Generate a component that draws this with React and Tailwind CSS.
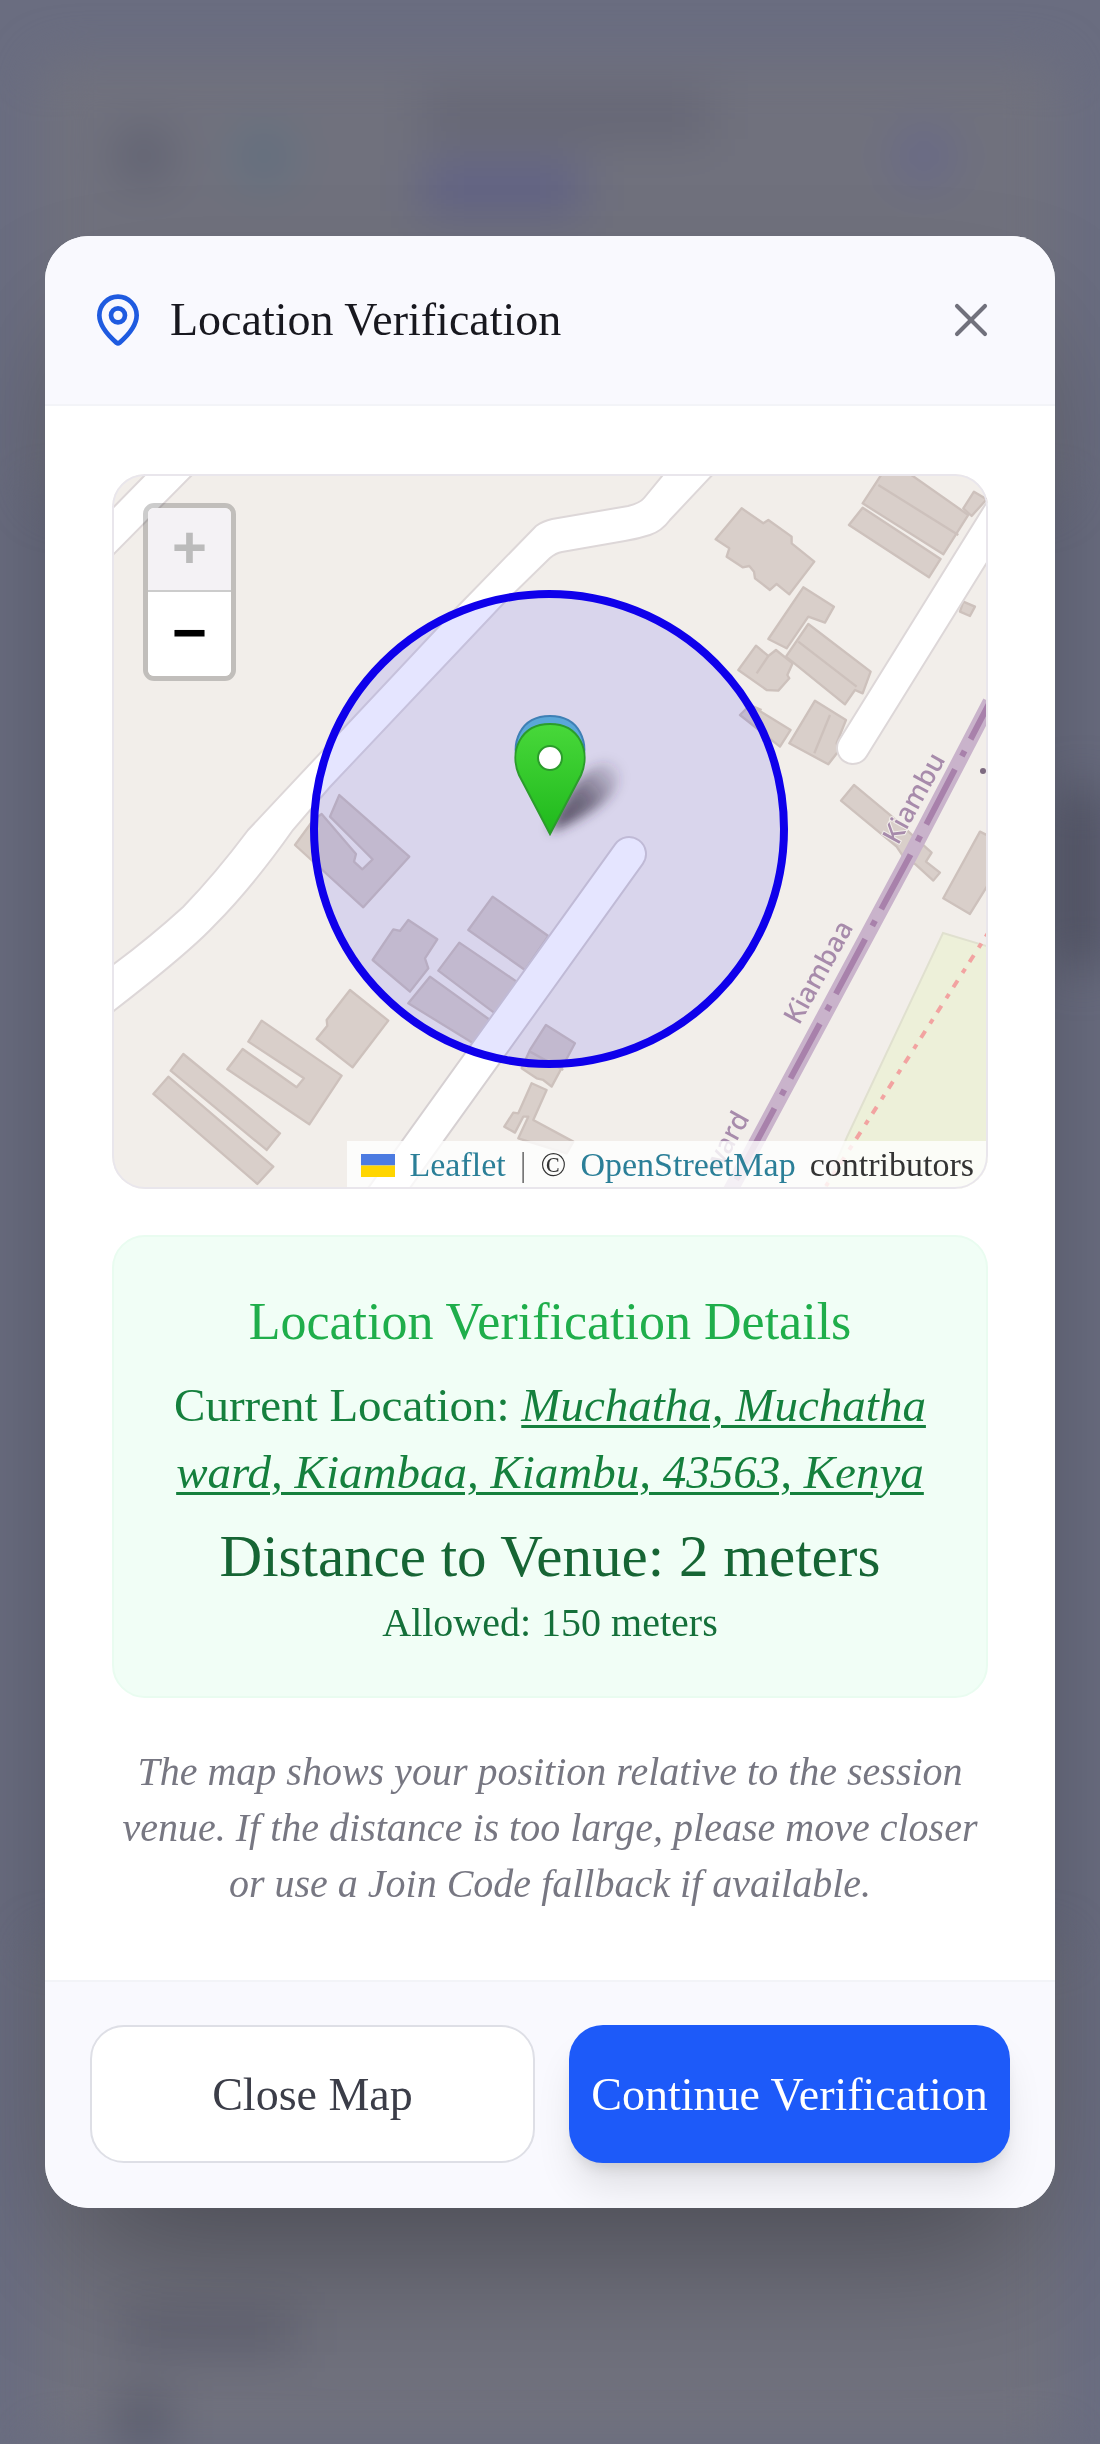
import React from 'react';
import { MapPin, X } from 'lucide-react';

// Building outlines, grouped by map tile. Each tile has its own origin, three units to a pixel.
const tiles = [
  {
    origin: 'translate(550 460) scale(0.3333)',
    buildings: [
      '575,145 640,190 655,180 725,230 725,250 793,305 718,403 680,372 660,390 615,355 612,335 598,318 578,322 530,290 538,265 497,238',
      '760,382 852,440 825,488 775,470 710,565 655,537',
      '775,492 962,635 938,700 915,690 885,733 708,590',
      '618,557 655,588 678,570 728,610 712,645 718,655 685,692 650,690 565,630',
      '600,735 722,810 690,860 570,765',
      '795,722 888,780 860,850 868,870 835,913 718,850',
      '1000,35 1070,35 1255,165 1180,283 938,130',
      '938,143 1172,297 1137,352 897,195',
      '1272,95 1310,118 1265,168 1240,145',
      '1240,425 1275,440 1260,468 1230,455',
      '912,975 1020,1065 1145,1178 1128,1205 1170,1238 1150,1262 1095,1212 1060,1190 1040,1160 873,1022',
      '1290,1115 1320,1130 1320,1265 1260,1362 1180,1315',
    ],
    walls: ['745,545 920,680', '840,765 793,880', '985,75 1225,225', '655,588 620,640', '600,735 635,750'],
  },
  {
    origin: 'translate(100 830) scale(0.3333)',
    buildings: [
      '250,672 540,910 500,960 212,722',
      '205,740 520,1010 472,1062 160,792',
      '485,572 725,737 628,883 382,718 428,657 590,772 612,745 445,635',
      '750,480 865,572 758,712 650,627 682,587 680,570',
      '718,-105 928,80 790,232 585,45 640,-30 665,-48 768,72 762,95 787,118 818,88 790,60 690,-40',
      '925,270 1012,328 975,385 985,415 930,485 818,390 880,298 900,303',
      '1178,200 1345,318 1275,420 1105,300',
      '1078,338 1250,455 1185,550 1015,422',
      '990,440 1170,570 1120,640 925,520',
      '1338,585 1425,640 1355,770 1330,750 1310,745 1265,715 1290,660',
      '1295,760 1340,780 1300,870 1420,935 1400,970 1255,925 1285,860 1270,860 1245,908 1213,890 1240,848 1255,850',
    ],
    walls: ['1290,665 1390,720'],
  },
];

const MapCanvas = () => (
  <svg viewBox="112 474 876 715" className="block h-auto w-full" role="img" aria-label="Map of the session venue">
    <defs>
      <linearGradient id="pinGreen" x1="0" y1="0" x2="0" y2="1">
        <stop offset="0" stopColor="#48d83a" />
        <stop offset="1" stopColor="#1fb91c" />
      </linearGradient>
      <linearGradient id="pinShadow" gradientUnits="userSpaceOnUse" x1="550" y1="832" x2="622" y2="765">
        <stop offset="0" stopColor="#332a40" stopOpacity="0.85" />
        <stop offset="0.5" stopColor="#332a40" stopOpacity="0.6" />
        <stop offset="1" stopColor="#332a40" stopOpacity="0" />
      </linearGradient>
      <filter id="soft" x="-50%" y="-50%" width="200%" height="200%">
        <feGaussianBlur stdDeviation="6" />
      </filter>
    </defs>
    <rect x="112" y="474" width="876" height="715" fill="#f2eeea" />

    {/* Park and footpath */}
    <path d="M943 933 L1000 950 V1200 H820 L847 1137 Z" fill="#edf0d9" stroke="#e0e0cf" strokeWidth="2" />
    <path d="M990 930 L826 1186" fill="none" stroke="#f2a3a1" strokeWidth="4" strokeDasharray="8 8 5 9" />

    {tiles.map((tile) => (
      <g key={tile.origin} transform={tile.origin} fill="#d9cfca" stroke="#cdc1bc" strokeWidth="7" strokeLinejoin="round">
        {tile.buildings.map((points) => (
          <polygon key={points} points={points} />
        ))}
        {tile.walls.map((points) => (
          <polyline key={points} points={points} fill="none" />
        ))}
      </g>
    ))}

    {/* Roads */}
    <g fill="#fff" stroke="#ddd7d8" strokeWidth="2">
      <path d="M100 521 L148 472 H195 L100 568 Z" />
      <path d="M100 974 L115 963 Q150 937 183 907 Q215 874 248 830 L459 605 L536 526 Q543 521 552 519 L628 506 Q640 503 644 498 L667 470 H717 L670 520 Q662 531 650 535 Q638 539 625 541 L562 552 Q556 553 550 558 L503 604 L330 787 L293 830 Q252 888 215 925 Q190 952 115 1010 L100 1022 Z" />
    </g>
    <g fill="none" strokeLinecap="round">
      <path d="M853 748 L1010 495" stroke="#ddd7d8" strokeWidth="34" />
      <path d="M853 748 L1010 495" stroke="#fff" strokeWidth="30" />
      <path d="M629 854 L379 1202" stroke="#d6d0d2" strokeWidth="36" />
      <path d="M629 854 L379 1202" stroke="#fff" strokeWidth="32" />
    </g>

    {/* Ward boundary */}
    <path d="M990 702 L913 850 L728 1195" fill="none" stroke="#c9b3cb" strokeWidth="15" />
    <path d="M990 702 L913 850 L728 1195" fill="none" stroke="#a881ab" strokeWidth="6" strokeDasharray="62 13 6 15" strokeDashoffset="20" />
    <circle cx="983" cy="771" r="3" fill="#7d6a80" />
    <g className="font-['Noto_Sans',sans-serif]" fontSize="27" fontWeight="500" fill="#a78bab" stroke="#f2eeea" strokeWidth="2" paintOrder="stroke">
      <text transform="translate(898 846) rotate(-61)">Kiambu</text>
      <text transform="translate(799 1026) rotate(-61)">Kiambaa</text>
      <text transform="translate(750 1118) rotate(-61)" textAnchor="end">ward</text>
    </g>

    {/* Allowed radius */}
    <circle cx="549" cy="829" r="235" fill="#00f" fillOpacity="0.1" stroke="#0f00eb" strokeWidth="8" />

    {/* Venue pin under the user's pin */}
    <path d="M550 832 C560 802 580 770 604 762 C626 760 624 786 604 802 C588 815 570 824 550 832 Z" fill="url(#pinShadow)" filter="url(#soft)" />
    <path d="M550 826 L519 767 C510 743 520 716 550 716 C580 716 590 743 581 767 Z" fill="#5aa7d8" stroke="#3f80b5" strokeWidth="2" />
    <path d="M550 834 L519 775 C509 752 520 724 550 724 C580 724 591 752 581 775 Z" fill="url(#pinGreen)" stroke="#2b9c2b" strokeWidth="2" />
    <circle cx="550" cy="758" r="12" fill="#fff" stroke="#2b9c2b" strokeWidth="2" />
  </svg>
);

const LocationMap = () => (
  <div className="relative overflow-hidden rounded-[33px]">
    <MapCanvas />
    <div className="absolute left-[31px] top-[29px] flex flex-col overflow-hidden rounded-[11px] border-[5px] border-black/20 bg-clip-padding font-['Liberation_Mono',monospace] text-[60px] font-bold leading-none">
      <button disabled aria-label="Zoom in" className="flex h-[84px] w-[83px] items-center justify-center border-b-2 border-[#ccc] bg-[#f4f2f5] pt-[5px] text-[#bbb]">+</button>
      <button aria-label="Zoom out" className="flex h-[84px] w-[83px] items-center justify-center bg-white pt-[5px] text-black">−</button>
    </div>
    <div className="absolute bottom-0 right-0 flex h-12 items-center gap-[14px] bg-white/80 px-[14px] text-[34px] leading-none text-[#333]">
      <a href="#leaflet" className="flex items-center gap-[14px] text-[#2b7f98]">
        <svg viewBox="0 0 12 8" className="h-[23px] w-[34px]" preserveAspectRatio="none" aria-hidden="true">
          <path fill="#4c7be1" d="M0 0h12v4H0z" />
          <path fill="#ffd500" d="M0 4h12v4H0z" />
        </svg>
        Leaflet
      </a>
      <span className="text-[#777]">|</span>
      <span>©</span>
      <a href="#osm" className="text-[#2b7f98]">OpenStreetMap</a>
      <span>contributors</span>
    </div>
    <div className="pointer-events-none absolute inset-0 rounded-[33px] border-2 border-[#e9e6ec]" />
  </div>
);

// Session page that sits blurred behind the dialog
const Backdrop = () => (
  <div className="fixed inset-0 overflow-hidden bg-[#6a6d80]">
    <div className="flex h-full flex-col px-10 pt-[60px] blur-xl">
      <div className="flex h-[440px] items-start justify-between rounded-3xl bg-[#70717d] pl-[76px] pr-[108px] pt-8">
        <div className="flex gap-16 pt-9">
          <div className="size-14 rounded-full bg-[#5e6070]" />
          <div className="size-14 rounded-full bg-[#5f7080]" />
        </div>
        <div className="mr-14 flex w-72 flex-col gap-6">
          <div className="h-12 bg-[#656675]" />
          <div className="h-12 w-40 bg-[#5f6086]" />
        </div>
        <div className="mt-9 size-14 rounded-full bg-[#66678a]" />
      </div>
      <div className="-mr-10 mt-[290px] h-44 w-9 self-end bg-[#4d4f60]" />
      <div className="mt-auto flex h-[500px] flex-col justify-end gap-10 bg-[#70717d] px-20">
        <div className="h-12 w-44 bg-[#626372]" />
        <div className="size-12 bg-[#565868]" />
      </div>
    </div>
  </div>
);

const App = () => {
  return (
    <div className="font-['Liberation_Serif',serif]">
      <Backdrop />
      <div className="relative flex min-h-screen items-center justify-center px-[45px] py-8">
        <div role="dialog" aria-labelledby="dialog-title" className="w-full overflow-hidden rounded-[44px] bg-white shadow-[0_70px_140px_-34px_rgba(0,0,0,0.35)]">
          {/* Header */}
          <div className="flex items-center justify-between border-b-2 border-[#f3f4f8] bg-[#f9f9fe] p-[45px]">
            <div className="flex items-center gap-6">
              <MapPin size={56} className="text-[#1f5be0]" />
              <h2 id="dialog-title" className="text-[46px] leading-[56px] text-[#18181f]">Location Verification</h2>
            </div>
            <button aria-label="Close" className="p-[11px] text-[#71717c]">
              <X size={56} strokeWidth={1.75} />
            </button>
          </div>

          {/* Body */}
          <div className="flex flex-col gap-[46px] px-[67px] py-[68px]">
            <LocationMap />

            <div className="rounded-[33px] border-2 border-[#e9fcf0] bg-[#f1fef6] p-[45px] text-center">
              <h3 className="text-[52px] leading-[79px] text-[#1fae4b]">Location Verification Details</h3>
              <p className="mt-[11px] text-[47px] leading-[67px] text-[#15803d]">
                Current Location: <em className="underline decoration-[3px] underline-offset-4">Muchatha, Muchatha ward, Kiambaa, Kiambu, 43563, Kenya</em>
              </p>
              <p className="mt-[11px] text-[59px] leading-[78px] text-[#166534]">
                Distance to Venue: <span className="font-medium">2</span> meters
              </p>
              <p className="text-[40px] leading-[56px] text-[#15703a]">Allowed: 150 meters</p>
            </div>

            <p className="text-center text-[40px] italic leading-[56px] text-[#777782]">
              The map shows your position relative to the session venue. If the distance is too large, please move closer or use a Join Code fallback if available.
            </p>
          </div>

          {/* Footer */}
          <div className="flex gap-[34px] border-t-2 border-[#f3f4f8] bg-[#f9f9fe] p-[45px] pt-[43px] text-[46px]">
            <button className="h-[138px] flex-1 rounded-[34px] border-2 border-[#dedfe6] bg-white text-[#3b3d48]">Close Map</button>
            <button className="h-[138px] flex-1 rounded-[34px] bg-[#1d5af9] text-white shadow-[0_28px_42px_-8px_rgba(0,0,0,0.12),0_10px_16px_-8px_rgba(0,0,0,0.14)]">Continue Verification</button>
          </div>
        </div>
      </div>
    </div>
  );
};

export default App;
